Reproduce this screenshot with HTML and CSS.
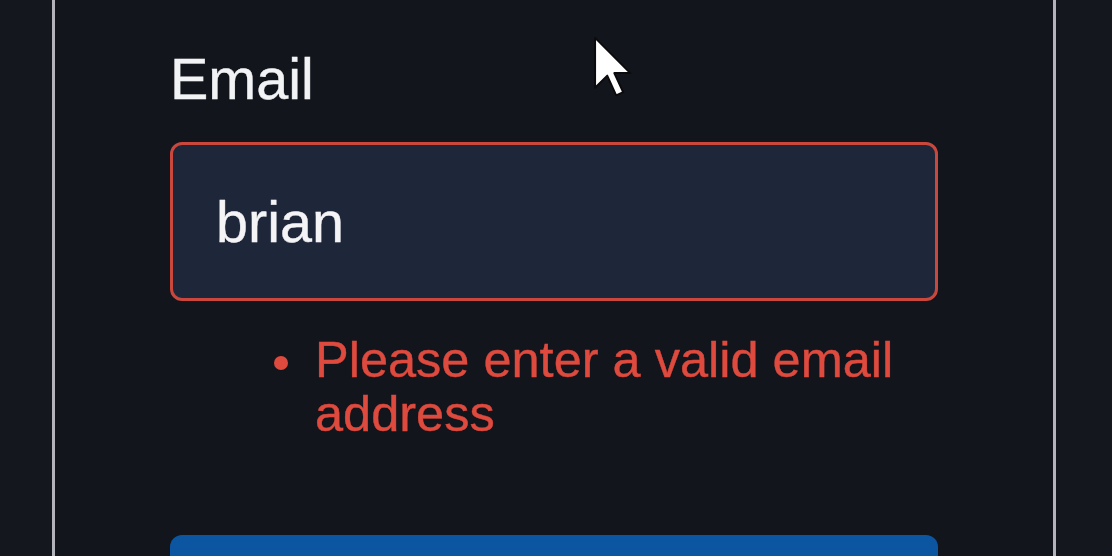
FILE: index.html
```html
<!DOCTYPE html>
<html lang="en">
<head>
<meta charset="utf-8">
<title>Email</title>
<link rel="stylesheet" href="styles.css">
</head>
<body>
<main class="panel">
  <form class="form" novalidate>
    <label class="label" for="email">Email</label>
    <input class="input" id="email" type="text" value="brian">
    <ul class="errors">
      <li class="error"><span class="dot"></span><span class="error-text">Please enter a valid email address</span></li>
    </ul>
    <button class="submit" type="button"></button>
  </form>
</main>
<svg class="cursor" viewBox="0 0 12.4 19.4" width="40" height="62" aria-hidden="true">
  <polygon points="0.6,0.6 0.6,16.2 4.4,12.4 7.2,18.6 9.4,17.6 6.6,11.6 11.6,11.6" fill="#ffffff" stroke="#0b0b0d" stroke-width="0.6" stroke-linejoin="round"/>
</svg>
</body>
</html>
```
FILE: styles.css
```css
html, body {
  margin: 0;
  padding: 0;
  height: 100%;
  overflow: hidden;
  background: #15171e;
  font-family: "Liberation Sans", Arial, sans-serif;
}

.panel {
  box-sizing: border-box;
  margin-left: 52px;
  width: 1004px;
  height: 100vh;
  border-left: 3px solid #b3b3bb;
  border-right: 3px solid #b3b3bb;
  background: #13151c;
  padding: 47px 115px 0;
}

.form {
  display: flex;
  flex-direction: column;
}

.label {
  font-size: 57.5px;
  line-height: 65px;
  color: #f1f3f5;
  margin-bottom: 30px;
  -webkit-text-stroke: 0.4px #f1f3f5;
}

.input {
  box-sizing: border-box;
  width: 100%;
  height: 159px;
  margin: 0;
  padding: 0 40px 0 43px;
  border: 3px solid #c9473d;
  border-radius: 12px;
  background: #1e2639;
  color: #f4f4f6;
  font-family: "Liberation Sans", Arial, sans-serif;
  font-size: 57.5px;
  line-height: 65px;
  outline: none;
  -webkit-text-stroke: 0.4px #f4f4f6;
}

.errors {
  list-style: none;
  margin: 32px 0 0;
  padding: 0 0 0 104px;
}

.error {
  display: flex;
  align-items: flex-start;
  color: #de4a3e;
  font-size: 50.5px;
  line-height: 54px;
  -webkit-text-stroke: 0.4px #de4a3e;
}

.dot {
  flex: none;
  width: 14px;
  height: 14px;
  margin-top: 23px;
  margin-right: 27px;
  border-radius: 50%;
  background: #de4a3e;
}

.submit {
  margin-top: 94px;
  width: 100%;
  height: 80px;
  border: 0;
  border-radius: 12px;
  background: #0c55a1;
  padding: 0;
}

.cursor {
  position: absolute;
  left: 593px;
  top: 36px;
}
```
